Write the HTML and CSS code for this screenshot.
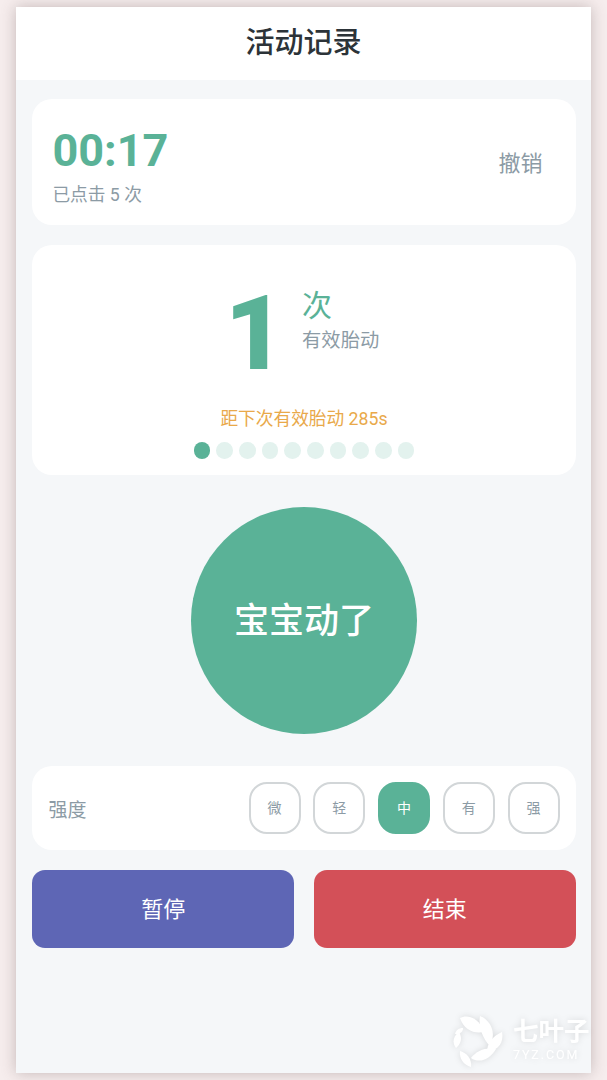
FILE: index.html
```html
<!DOCTYPE html>
<html lang="zh-CN">
<head>
<meta charset="UTF-8">
<meta name="viewport" content="width=device-width, initial-scale=1.0">
<title>活动记录</title>
<link rel="stylesheet" href="styles.css">
</head>
<body>

<div class="phone">
  <div class="header">活动记录</div>

  <div class="content">
    <!-- timer -->
    <div class="card timer-card">
      <div class="timer-info">
        <div class="time">00:17</div>
        <div class="clicks">已点击 5 次</div>
      </div>
      <div class="undo">撤销</div>
    </div>

    <!-- count -->
    <div class="card count-card">
      <div class="count-row">
        <div class="count-num">1</div>
        <div>
          <div class="count-unit">次</div>
          <div class="count-label">有效胎动</div>
        </div>
      </div>
      <div class="next-tip">距下次有效胎动 285s</div>
      <div class="dots">
        <span class="dot on"></span>
        <span class="dot"></span>
        <span class="dot"></span>
        <span class="dot"></span>
        <span class="dot"></span>
        <span class="dot"></span>
        <span class="dot"></span>
        <span class="dot"></span>
        <span class="dot"></span>
        <span class="dot"></span>
      </div>
    </div>

    <div class="big-btn">宝宝动了</div>

    <!-- intensity -->
    <div class="card level-card">
      <div class="level-title">强度</div>
      <div class="levels">
        <div class="level">微</div>
        <div class="level">轻</div>
        <div class="level on">中</div>
        <div class="level">有</div>
        <div class="level">强</div>
      </div>
    </div>

    <div class="actions">
      <div class="action pause">暂停</div>
      <div class="action stop">结束</div>
    </div>
  </div>
</div>

<!-- watermark -->
<div class="watermark">
  <svg class="wm-logo" width="52" height="56" viewBox="0 0 52 56" fill="#fff">
    <path d="M8 7 C15 3 27 6 32 21 C22 23 12 19 8 7Z"/>
    <path d="M28 5 C38 9 45 21 38 35 C31 28 26 16 28 5Z"/>
    <path d="M50 21 C52 31 47 39 35 41 C35 32 41 25 50 21Z"/>
    <path d="M44 38 C38 48 28 53 19 47 C25 39 34 36 44 38Z"/>
    <path d="M8 40 C15 42 20 48 19 56 C12 54 7 48 8 40Z"/>
    <path d="M7 21 C10 26 10 32 4 37 C0 32 1 25 7 21Z"/>
    <path d="M11 17 C11 21 8 23 3 23 C4 19 7 17 11 17Z"/>
  </svg>
  <div class="wm-text">
    <div class="wm-name">七叶子</div>
    <div class="wm-url">7YZ.COM</div>
  </div>
</div>

</body>
</html>
```

FILE: styles.css
```css
* {
  box-sizing: border-box;
}
html, body {
  margin: 0;
  height: 100%;
}
body {
  height: 1080px;
  padding: 7px 16px;
  overflow: hidden;
  position: relative;
  background-color: #f6eded;
  font-family: Roboto, "Noto Sans CJK SC", sans-serif;
}
.phone {
  height: 1066px;
  background-color: #f5f7f9;
  box-shadow: 0 0 14px rgba(90, 70, 70, 0.32);
}
.header {
  height: 73px;
  line-height: 72px;
  text-align: center;
  font-size: 29px;
  font-weight: 500;
  color: #2c3338;
  background-color: #fff;
}
.content {
  padding: 19px 15.4px 0 16.4px;
}
.card {
  background-color: #fff;
  border-radius: 20px;
}

.timer-card {
  height: 126px;
  display: flex;
  align-items: center;
  justify-content: space-between;
  padding: 0 33px 0 20px;
  margin-bottom: 20px;
}
.timer-info {
  padding-top: 8px;
}
.time {
  font-size: 45px;
  font-weight: 700;
  line-height: 52px;
  color: #5ab297;
}
.clicks {
  font-size: 17.7px;
  line-height: 24px;
  margin-top: 6px;
  color: #8c9ba5;
}
.undo {
  font-size: 22px;
  padding-bottom: 2px;
  color: #8c9ba5;
}

.count-card {
  height: 230px;
  padding-top: 30px;
  margin-bottom: 32px;
}
.count-row {
  display: flex;
  justify-content: center;
  gap: 17px;
  height: 118px;
  padding-right: 4px;
}
.count-num {
  font-size: 104px;
  font-weight: 900;
  line-height: 118px;
  color: #5ab297;
}
.count-unit {
  font-size: 30px;
  line-height: 42px;
  margin-top: 10px;
  color: #5ab297;
}
.count-label {
  font-size: 19.3px;
  line-height: 26px;
  margin-top: 1px;
  color: #8c9ba5;
}
.next-tip {
  margin-top: 14px;
  text-align: center;
  font-size: 17.7px;
  line-height: 24px;
  color: #e9a94a;
}
.dots {
  display: flex;
  justify-content: center;
  gap: 6px;
  margin-top: 11px;
}
.dot {
  width: 16.7px;
  height: 16.7px;
  border-radius: 50%;
  background-color: #e3f2ee;
}
.dot.on {
  background-color: #5ab297;
}

.big-btn {
  width: 226.5px;
  height: 227px;
  margin: 0 auto 32px;
  border-radius: 50%;
  background-color: #5ab297;
  color: #fff;
  font-size: 35px;
  font-weight: 500;
  text-align: center;
  line-height: 229px;
}

.level-card {
  height: 84px;
  display: flex;
  align-items: center;
  justify-content: space-between;
  padding: 0 16px;
  margin-bottom: 20px;
}
.level-title {
  font-size: 19px;
  color: #8c9ba5;
}
.levels {
  display: flex;
  gap: 12.75px;
}
.level {
  width: 52px;
  height: 52px;
  border: 2px solid #d2d6d8;
  border-radius: 18px;
  font-size: 14px;
  line-height: 48px;
  text-align: center;
  color: #8c9ba5;
}
.level.on {
  border-color: #5ab297;
  background-color: #5ab297;
  color: #fff;
}

.actions {
  display: flex;
  gap: 19.4px;
}
.action {
  flex: 1;
  height: 78px;
  border-radius: 13px;
  color: #fff;
  font-size: 22px;
  line-height: 80px;
  text-align: center;
}
.pause {
  background-color: #5e66b5;
}
.stop {
  background-color: #d35058;
}

.watermark {
  position: absolute;
  left: 452px;
  top: 1011px;
  display: flex;
  gap: 9px;
  filter: drop-shadow(0 0 3px rgba(0, 0, 0, 0.12));
}
.wm-logo {
  flex: none;
}
.wm-text {
  color: #fff;
  white-space: nowrap;
  padding-top: 5px;
}
.wm-name {
  font-size: 25.5px;
  line-height: 30px;
  font-weight: 700;
}
.wm-url {
  font-size: 12.5px;
  line-height: 16px;
  letter-spacing: 1.9px;
  margin-top: 1px;
}
```
